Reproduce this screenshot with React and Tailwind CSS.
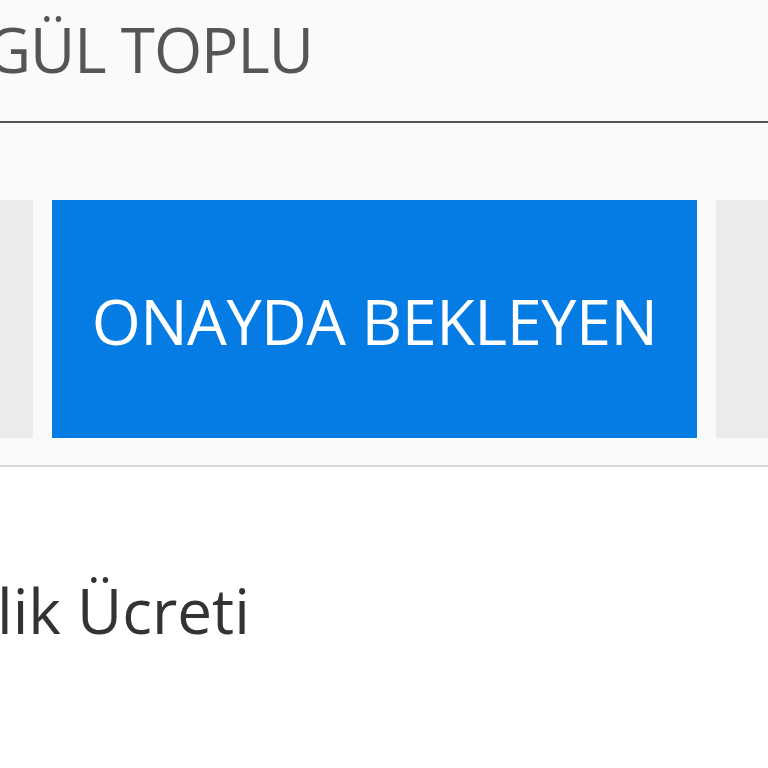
export default function App() {
  return (
    <div
      className="w-[768px] h-[768px] overflow-hidden bg-white"
      style={{ fontFamily: '"Open Sans", "Noto Sans", sans-serif' }}
    >
      <div className="h-[123px] bg-[#fafafa] border-b-2 border-[#555555] pt-[18px]">
        <div className="ml-[-14px] text-[62px] leading-none tracking-[-1px] text-[#555555] whitespace-nowrap">
          GÜL TOPLU
        </div>
      </div>
      <div className="bg-[#fafafa] pt-[77px] pb-[27px] border-b-2 border-[#d6d6d6]">
        <div className="flex gap-[19px] ml-[-167px]">
          <div className="w-[200px] h-[238px] shrink-0 bg-[#ebebeb]"></div>
          <div className="w-[645px] h-[238px] shrink-0 bg-[#047ce3] flex items-center justify-center">
            <span className="text-[63px] leading-none tracking-[-0.5px] text-white whitespace-nowrap pt-[2px]">
              ONAYDA BEKLEYEN
            </span>
          </div>
          <div className="w-[200px] h-[238px] shrink-0 bg-[#ebebeb]"></div>
        </div>
      </div>
      <div className="mt-[112px] text-[62px] leading-none text-[#333333] whitespace-nowrap ml-[-3px]">
        lik Ücreti
      </div>
    </div>
  );
}
